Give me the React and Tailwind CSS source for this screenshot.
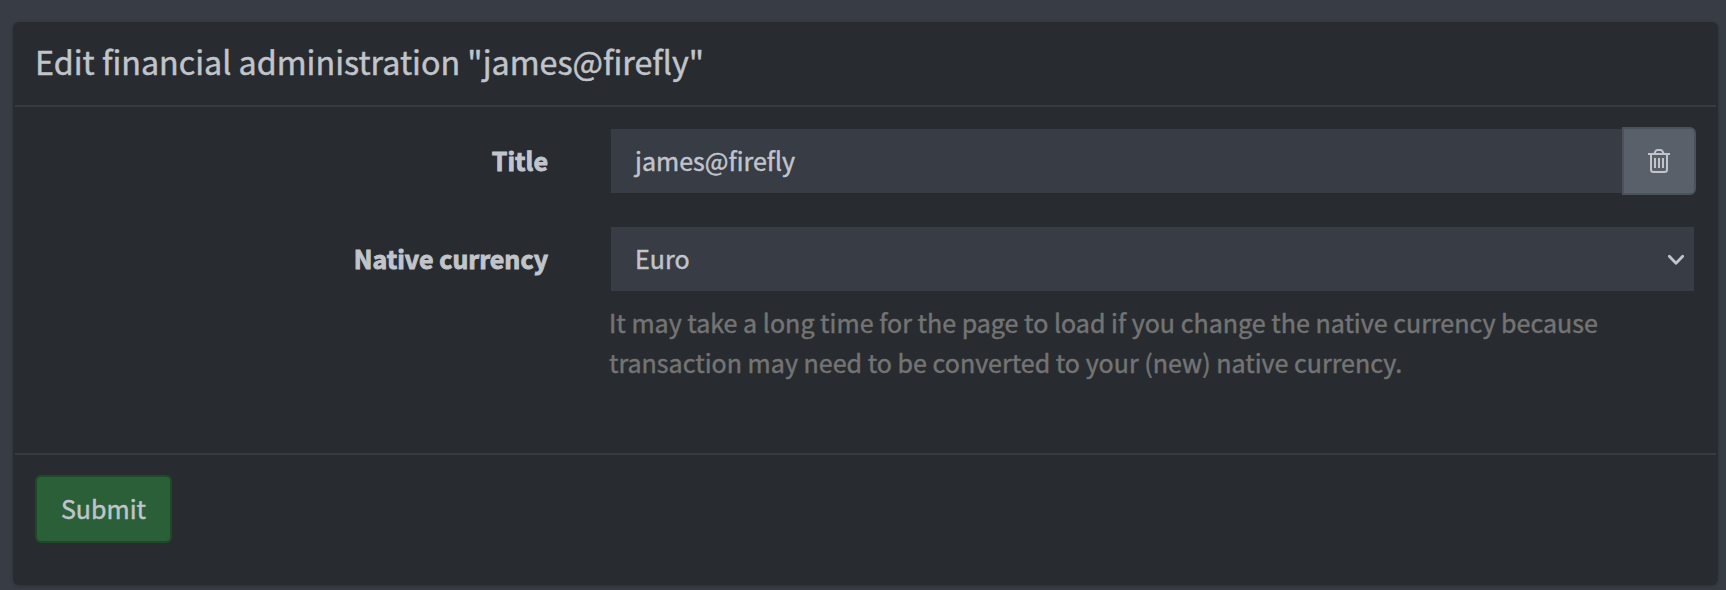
function TrashIcon() {
  return (
    <svg className="h-[24px] w-[22px]" viewBox="0 0 22 24" fill="none" stroke="currentColor" strokeWidth="2">
      <path d="M0 5h22" />
      <path d="M6.5 4.5 7.3 2.6Q8 1 9.6 1h2.8q1.600 0 2.300 1.600l.8 1.900" />
      <path d="M3 5v15.500Q3 23 5.500 23h11q2.500 0 2.500-2.500V5" />
      <path d="M7 9v10M11 9v10M15 9v10" />
    </svg>
  );
}

function ChevronDown() {
  return (
    <svg className="mt-px h-[12px] w-[18px]" viewBox="0 0 18 12" fill="none" stroke="currentColor" strokeWidth="2.8" strokeLinecap="round" strokeLinejoin="round">
      <path d="M2.300 2.300 9 9.300l6.700-7" />
    </svg>
  );
}

function Label({ children }) {
  return (
    <div className="flex h-[66px] w-[513px] shrink-0 items-center justify-end text-[25px] leading-[40px] font-bold [-webkit-text-stroke-width:0.9px]">
      {children}
    </div>
  );
}

export default function App() {
  return (
    <div className="h-[590px] w-full overflow-hidden bg-[#383c44] pt-[22px] pr-[8px] pl-[13px] font-['Noto_Sans_CJK_SC','Noto_Sans',sans-serif] text-[25.05px] text-[#c1c5cb] [-webkit-text-stroke-width:0.45px]">
      <section className="flex h-[563px] flex-col rounded-[6px] bg-[#282c30] px-[2px] shadow-[0_0_2px_rgba(0,0,0,0.1),0_2px_4px_rgba(0,0,0,0.12)]">
        <header className="flex h-[85px] shrink-0 items-center border-b-2 border-[#383b41] px-5 pb-[6px]">
          <h3 className="text-[32.25px] leading-[40px] whitespace-nowrap">Edit financial administration "james@firefly"</h3>
        </header>
        <div className="flex h-[346px] shrink-0 flex-col gap-[30px] pt-5 pl-5">
          <div className="flex h-[68px] gap-[63px]">
            <Label>Title</Label>
            <div className="flex items-center">
              <div className="flex h-[64px] w-[1011px] items-center bg-[#383c44] pl-[24px]">james@firefly</div>
              <button className="flex h-[68px] w-[74px] items-center justify-center rounded-r-[6px] border-2 border-[#4a525b] bg-[#596069]">
                <TrashIcon />
              </button>
            </div>
          </div>
          <div className="flex gap-[63px]">
            <Label>Native currency</Label>
            <div className="pt-[2px]">
              <div className="flex h-[64px] w-[1083px] items-center justify-between bg-[#383c44] pr-[9px] pl-[24px]">
                <span>Euro</span>
                <ChevronDown />
              </div>
              <p className="mt-[11px] -ml-[2px] leading-[40px] whitespace-nowrap text-[#747474]">
                It may take a long time for the page to load if you change the native currency because
                <br />
                transaction may need to be converted to your (new) native currency.
              </p>
            </div>
          </div>
        </div>
        <footer className="border-t-2 border-[#383b41] px-5 pt-5">
          <button className="h-[68px] w-[137px] rounded-[6px] border-2 border-[#1f4929] bg-[#2a5f38]">Submit</button>
        </footer>
      </section>
    </div>
  );
}
